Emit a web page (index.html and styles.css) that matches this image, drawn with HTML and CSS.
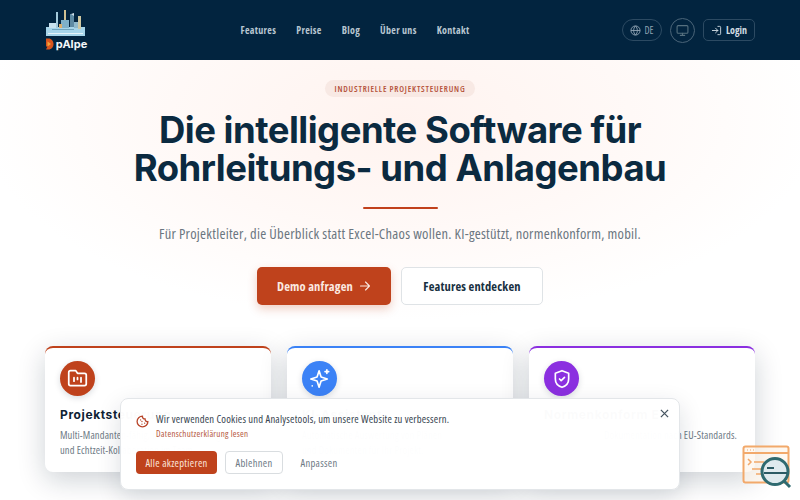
FILE: index.html
```html
<!DOCTYPE html>
<html lang="de">
<head>
<meta charset="utf-8">
<title>pAIpe</title>
<link rel="stylesheet" href="styles.css">
</head>
<body>
<header class="header">
  <a class="logo">
    <svg class="logo-art" width="40" height="27" viewBox="0 0 40 27">
      <rect x="0" y="17" width="39" height="9" fill="#a7d5ea"/>
      <rect x="3" y="13" width="7" height="5" fill="#c8e2ee"/>
      <rect x="10" y="2" width="2" height="16" fill="#a4cadb"/>
      <rect x="18" y="0" width="2" height="17" fill="#cfc092"/>
      <rect x="15" y="10" width="8" height="8" fill="#7fb0c8"/>
      <rect x="24" y="4" width="4" height="13" fill="#5d8aa3"/>
      <path d="M25 4l3-1v3z" fill="#cfe0ea"/>
      <rect x="32" y="6" width="3" height="13" fill="#cfc8a2"/>
      <rect x="13" y="14" width="3" height="4" fill="#dcb070"/>
      <rect x="28" y="12" width="4" height="6" fill="#8fb9cc"/>
      <rect x="2" y="23" width="35" height="1" fill="#e6f3f9"/>
      <rect x="6" y="19" width="22" height="1" fill="#6fa4bd"/>
    </svg>
    <span class="logo-row">
      <svg width="9" height="12" viewBox="0 0 9 12"><path d="M1 0.500h2.500c3 0 5 2.500 5 5.500s-2 5.500-5 5.500H1l1.500-3H1z" fill="#d9541e"/><path d="M2.500 3.500l3.500 2.500-3.500 2.500z" fill="#f0a53a"/></svg>
      <span class="logo-text">pAIpe</span>
    </span>
  </a>
  <nav class="nav">
    <a>Features</a><a>Preise</a><a>Blog</a><a>Über uns</a><a>Kontakt</a>
  </nav>
  <div class="actions">
    <button class="pill lang">
      <svg width="11" height="11" viewBox="0 0 24 24" fill="none" stroke="currentColor" stroke-width="2"><circle cx="12" cy="12" r="10"/><path d="M2 12h20M12 2c3 3 4 6.500 4 10s-1 7-4 10c-3-3-4-6.500-4-10s1-7 4-10z"/></svg>
      DE
    </button>
    <button class="round">
      <svg width="13" height="13" viewBox="0 0 24 24" fill="none" stroke="currentColor" stroke-width="2" stroke-linecap="round" stroke-linejoin="round"><rect x="2" y="3" width="20" height="14" rx="2"/><path d="M8 21h8M12 17v4"/></svg>
    </button>
    <button class="login">
      <svg width="11" height="11" viewBox="0 0 24 24" fill="none" stroke="currentColor" stroke-width="2" stroke-linecap="round" stroke-linejoin="round"><path d="M15 3h4a2 2 0 0 1 2 2v14a2 2 0 0 1-2 2h-4M10 17l5-5-5-5M15 12H3"/></svg>
      Login
    </button>
  </div>
</header>

<main class="hero">
  <span class="badge">INDUSTRIELLE PROJEKTSTEUERUNG</span>
  <h1>Die intelligente Software für<br>Rohrleitungs- und Anlagenbau</h1>
  <div class="rule"></div>
  <p class="sub">Für Projektleiter, die Überblick statt Excel-Chaos wollen. KI-gestützt, normenkonform, mobil.</p>
  <div class="cta">
    <a class="btn primary">Demo anfragen
      <svg width="12" height="12" viewBox="0 0 24 24" fill="none" stroke="currentColor" stroke-width="2.200" stroke-linecap="round" stroke-linejoin="round"><path d="M3 12h18M13 4l8 8-8 8"/></svg>
    </a>
    <a class="btn secondary">Features entdecken</a>
  </div>
  <section class="cards">
    <article class="card c-red">
      <div class="ic">
        <svg width="21" height="21" viewBox="0 0 24 24" fill="none" stroke="currentColor" stroke-width="2" stroke-linecap="round" stroke-linejoin="round"><path d="M20 20a2 2 0 0 0 2-2V8a2 2 0 0 0-2-2h-8l-2-3H4a2 2 0 0 0-2 2v13a2 2 0 0 0 2 2z"/><path d="M8 11v4M12 11v2M16 11v5"/></svg>
      </div>
      <h3>Projektsteuerung</h3>
      <p>Multi-Mandanten-fähig, mit Gantt-Planung<br>und Echtzeit-Kollaboration im Team.</p>
    </article>
    <article class="card c-blue">
      <div class="ic">
        <svg width="22" height="22" viewBox="0 0 24 24" fill="none" stroke="currentColor" stroke-width="1.800" stroke-linecap="round" stroke-linejoin="round"><path d="M11 3l2.200 6.800L20 12l-6.800 2.200L11 21l-2.200-6.800L2 12l6.800-2.200z"/><path d="M19.500 2v4M17.500 4h4M3.500 19.500h.010"/></svg>
      </div>
      <h3>KI-Assistent</h3>
      <p>Automatische Auswertung von Plänen<br>und Dokumenten für Ihr Projekt.</p>
    </article>
    <article class="card c-purple">
      <div class="ic">
        <svg width="20" height="20" viewBox="0 0 24 24" fill="none" stroke="currentColor" stroke-width="2" stroke-linecap="round" stroke-linejoin="round"><path d="M12 2l8 3v7c0 5-3.500 8.500-8 10-4.500-1.500-8-5-8-10V5z"/><path d="M9 12l2 2 4-4"/></svg>
      </div>
      <h3>Normenkonform EU</h3>
      <p class="endline">Dokumentation nach EU-Standards.</p>
    </article>
  </section>
</main>

<aside class="cookie">
  <button class="close" aria-label="Schließen">
    <svg width="9" height="9" viewBox="0 0 10 10" fill="none" stroke="currentColor" stroke-width="1.400"><path d="M1 1l8 8M9 1l-8 8"/></svg>
  </button>
  <div class="cookie-top">
    <svg class="cookie-ic" width="13" height="13" viewBox="0 0 24 24" fill="none" stroke="currentColor" stroke-width="2.400" stroke-linecap="round" stroke-linejoin="round"><path d="M12 2a10 10 0 1 0 10 10 4 4 0 0 1-5-5 4 4 0 0 1-5-5z"/><path d="M8.500 9h.010M16 15h.010M11 17h.010M11 12h.010"/></svg>
    <div>
      <p class="cookie-text">Wir verwenden Cookies und Analysetools, um unsere Website zu verbessern.</p>
      <a class="cookie-link">Datenschutzerklärung lesen</a>
    </div>
  </div>
  <div class="cookie-btns">
    <button class="cb accept">Alle akzeptieren</button>
    <button class="cb reject">Ablehnen</button>
    <button class="cb adjust">Anpassen</button>
  </div>
</aside>

<svg class="widget" width="50" height="44" viewBox="0 0 50 44" fill="none">
  <rect x="1.500" y="1.500" width="45" height="36" rx="2" fill="#fdf3e8" fill-opacity=".6" stroke="#f2a96b" stroke-width="2"/>
  <path d="M2 8h44" stroke="#f2a96b" stroke-width="2"/>
  <path d="M5 5h1M8 5h1M11 5h1" stroke="#f2a96b"/>
  <path d="M6 14l3 3-3 3M12 17h10M10 24h14M14 29h10" stroke="#f2a96b" stroke-width="1.500"/>
  <circle cx="33" cy="26.500" r="13" fill="#dfeaee" stroke="#2f6a70" stroke-width="3"/>
  <path d="M22 28h23" stroke="#2b5a64" stroke-width="2"/>
  <path d="M25 23h7" stroke="#2b5a64" stroke-width="2"/>
  <path d="M42 36l6 6" stroke="#2f6a70" stroke-width="3"/>
</svg>
</body>
</html>
```
FILE: styles.css
```css
* { box-sizing: border-box; }
html, body { margin: 0; height: 500px; overflow: hidden; }
body {
  position: relative;
  font-family: "Open Sans", sans-serif;
  font-stretch: 75%;
  background: #fff;
  color: #0f2a40;
}
button { font-stretch: 75%; }
.header {
  height: 60px;
  background: #02243f;
  display: flex;
  align-items: center;
  justify-content: space-between;
  padding: 0 45px;
}
.logo { display: flex; flex-direction: column; align-items: center; width: 42px; }
.logo-art { display: block; }
.logo-row { display: flex; align-items: center; gap: 2px; }
.logo-text { font: 700 11px/14px "Inter", sans-serif; color: #f2f7fa; }
.nav { display: flex; gap: 20px; margin-left: 1px; }
.nav a { font-weight: 700; font-size: 10px; line-height: 14px; letter-spacing: .3px; color: #b8c6d1; }
.actions { display: flex; align-items: center; gap: 8px; }
.actions button { background: none; font-family: "Open Sans", sans-serif; color: #8fa3b2; display: flex; align-items: center; justify-content: center; padding: 0; }
.pill { width: 40px; height: 22px; border: 1px solid #2c4a62; border-radius: 11px; gap: 3px; font-size: 10px; }
.actions .round { width: 25px; height: 25px; border: 1px solid #4a6478; border-radius: 50%; color: #56707f; }
.actions .login { width: 52px; height: 22px; border: 1px solid #2c4a62; border-radius: 5px; gap: 4px; font-size: 10px; font-weight: 700; color: #d3dde4; }
.hero {
  height: 440px;
  display: flex;
  flex-direction: column;
  align-items: center;
  padding: 20px 45px 0;
  background: radial-gradient(ellipse 420px 200px at 50% 60px, #fff3ef 0%, #fff9f7 55%, #fff 100%);
}
.badge {
  height: 17px;
  padding: 0 10px;
  border-radius: 9px;
  background: #f8e9e4;
  color: #b5523a;
  font-weight: 600;
  font-size: 8.500px;
  line-height: 17px;
  letter-spacing: .8px;
}
h1 {
  margin: 14px 0 0;
  font: 700 36.500px/38px "Inter", sans-serif;
  letter-spacing: -.5px;
  text-align: center;
  color: #0b2a40;
}
.rule { width: 75px; height: 2px; margin-top: 20px; background: #c1411c; border-radius: 1px; }
.sub { margin: 16px 0 0; font-size: 14.500px; line-height: 18px; letter-spacing: .25px; color: #6b7680; }
.cta { display: flex; gap: 10px; margin-top: 24px; }
.btn { height: 38px; border-radius: 5px; display: flex; align-items: center; justify-content: center; font-size: 12.500px; font-weight: 700; letter-spacing: .15px; }
.primary { width: 134px; gap: 6px; background: #bf421c; color: #fbe9e0; box-shadow: 0 4px 10px rgba(191, 66, 28, .25); }
.secondary { width: 142px; background: #fff; border: 1px solid #dfe3e6; color: #17303f; }
.cards { display: grid; grid-template-columns: repeat(3, minmax(0, 1fr)); gap: 16px; width: 100%; margin-top: 41px; }
.card {
  height: 126px;
  padding: 13px 15px 0;
  background: #fff;
  border-radius: 8px;
  border-top: 2px solid #bf421c;
  box-shadow: 0 8px 28px rgba(10, 30, 50, .2);
}
.c-blue { border-top-color: #3b82f6; }
.c-purple { border-top-color: #8b2fe0; }
.ic { width: 35px; height: 35px; border-radius: 50%; display: flex; align-items: center; justify-content: center; color: #fff; background: #bf421c; box-shadow: 0 2px 6px rgba(10, 30, 50, .15); }
.c-blue .ic { background: #3b82f6; }
.c-purple .ic { background: #8b2fe0; }
.card h3 { margin: 11px 0 0; font: 700 12px/16px "Inter", sans-serif; letter-spacing: .6px; color: #0f2233; }
.card p { margin: 5px 0 0; font-size: 10.500px; line-height: 15px; letter-spacing: .13px; color: #6e7a85; }
.card .endline { text-align: right; padding-right: 3px; }
.cookie {
  position: absolute;
  left: 120px;
  top: 398px;
  width: 560px;
  height: 92px;
  padding: 13px 15px;
  background: rgba(255, 255, 255, .985);
  border: 1px solid #e3e6e9;
  border-radius: 8px;
  box-shadow: 0 8px 24px rgba(10, 30, 50, .14);
}
.close { position: absolute; top: 8px; right: 9px; width: 12px; height: 12px; padding: 0; background: none; border: 0; color: #44525e; display: flex; align-items: center; justify-content: center; }
.cookie-top { display: flex; gap: 7px; }
.cookie-ic { color: #b8452a; margin-top: 3px; }
.cookie-text { margin: 0; font-size: 10.600px; line-height: 14px; letter-spacing: .2px; color: #37444f; }
.cookie-link { display: block; margin-top: 2px; font-size: 9px; line-height: 12px; letter-spacing: .27px; color: #b5573e; }
.cookie-btns { display: flex; gap: 8px; margin-top: 11px; }
.cb { height: 23px; border-radius: 4px; font-family: "Open Sans", sans-serif; font-size: 10.500px; letter-spacing: .3px; padding: 0; }
.accept { width: 81px; background: #bf421c; color: #fbe4da; border: 0; }
.reject { width: 58px; background: #fff; border: 1px solid #d9dde0; color: #6e7a85; }
.adjust { width: 56px; background: none; border: 0; color: #6e7a85; }
.widget { position: absolute; left: 742px; top: 445px; }
```
